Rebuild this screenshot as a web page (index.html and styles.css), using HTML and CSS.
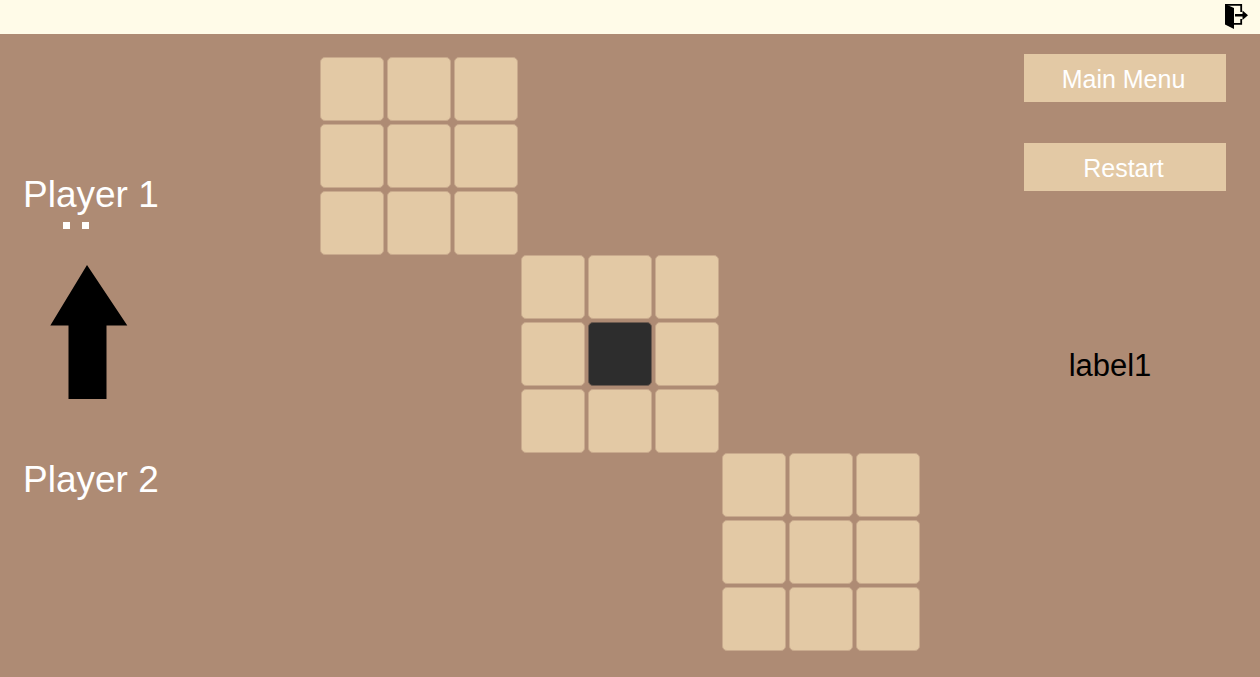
FILE: index.html
```html
<!DOCTYPE html>
<html lang="en">
<head>
<meta charset="utf-8">
<title>Game</title>
<link rel="stylesheet" href="styles.css">
</head>
<body>
<header class="topbar">
  <button class="exit" type="button" aria-label="Exit">
    <svg width="24" height="26" viewBox="0 0 24 26" aria-hidden="true">
      <path d="M1 1L10 5V26L1 21.500Z"/>
      <path d="M1 1.800H17.200V9M17.200 16V20.800H10" fill="none" stroke="#000" stroke-width="1.800"/>
      <path d="M11 11H18.500V7.500L24 12.200L18.500 17V13.600H11Z"/>
    </svg>
  </button>
</header>
<main class="game">
  <section class="players">
    <h2 class="player">Player 1</h2>
    <div class="score">
      <span class="dot"></span>
      <span class="dot"></span>
    </div>
    <svg class="turn" width="78" height="135" viewBox="0 0 78 135" aria-hidden="true">
      <path d="M36 0L76.300 60.500H55.500V134H17.500V60.500H-0.700Z"/>
    </svg>
    <h2 class="player">Player 2</h2>
  </section>
  <section class="board">
    <div class="block first">
      <button class="tile" type="button" aria-label="Tile 1"></button>
      <button class="tile" type="button" aria-label="Tile 2"></button>
      <button class="tile" type="button" aria-label="Tile 3"></button>
      <button class="tile" type="button" aria-label="Tile 4"></button>
      <button class="tile" type="button" aria-label="Tile 5"></button>
      <button class="tile" type="button" aria-label="Tile 6"></button>
      <button class="tile" type="button" aria-label="Tile 7"></button>
      <button class="tile" type="button" aria-label="Tile 8"></button>
      <button class="tile" type="button" aria-label="Tile 9"></button>
    </div>
    <div class="block second">
      <button class="tile" type="button" aria-label="Tile 10"></button>
      <button class="tile" type="button" aria-label="Tile 11"></button>
      <button class="tile" type="button" aria-label="Tile 12"></button>
      <button class="tile" type="button" aria-label="Tile 13"></button>
      <button class="tile dark" type="button" aria-label="Tile 14"></button>
      <button class="tile" type="button" aria-label="Tile 15"></button>
      <button class="tile" type="button" aria-label="Tile 16"></button>
      <button class="tile" type="button" aria-label="Tile 17"></button>
      <button class="tile" type="button" aria-label="Tile 18"></button>
    </div>
    <div class="block third">
      <button class="tile" type="button" aria-label="Tile 19"></button>
      <button class="tile" type="button" aria-label="Tile 20"></button>
      <button class="tile" type="button" aria-label="Tile 21"></button>
      <button class="tile" type="button" aria-label="Tile 22"></button>
      <button class="tile" type="button" aria-label="Tile 23"></button>
      <button class="tile" type="button" aria-label="Tile 24"></button>
      <button class="tile" type="button" aria-label="Tile 25"></button>
      <button class="tile" type="button" aria-label="Tile 26"></button>
      <button class="tile" type="button" aria-label="Tile 27"></button>
    </div>
  </section>
  <aside class="actions">
    <button class="action" type="button">Main Menu</button>
    <button class="action" type="button">Restart</button>
    <p class="status">label1</p>
  </aside>
</main>
</body>
</html>
```

FILE: styles.css
```css
* {
  box-sizing: border-box;
}

body {
  display: flex;
  flex-direction: column;
  min-height: 100vh;
  margin: 0;
  background: #ae8b74;
  font-family: "Liberation Sans", Arial, sans-serif;
}

button {
  padding: 0;
  border: 0;
  font: inherit;
  cursor: pointer;
}

.topbar {
  display: flex;
  justify-content: flex-end;
  align-items: center;
  height: 34px;
  padding: 0 12px 2px;
  background: #fffbe8;
}

.exit {
  display: flex;
  background: none;
}

.game {
  display: grid;
  grid-template-columns: 1fr auto 1fr;
  align-items: start;
  padding-right: 20px;
}

.players {
  display: flex;
  flex-direction: column;
  align-items: flex-start;
  padding: 141px 0 0 23px;
}

.player {
  margin: 0;
  color: #fff;
  font-size: 37px;
  font-weight: 400;
  line-height: 40px;
}

.score {
  display: flex;
  gap: 12px;
  margin: 7px 0 0 40px;
}

.dot {
  width: 7px;
  height: 7px;
  background: #fff;
}

.turn {
  display: block;
  margin: 36px 0 60px 28px;
  overflow: visible;
}

.board {
  display: grid;
  grid-template-columns: repeat(3, auto);
  column-gap: 3px;
  padding-top: 23px;
}

.block {
  display: grid;
  grid-template-columns: repeat(3, 64px);
  grid-auto-rows: 64px;
  gap: 3px;
}

.first {
  grid-area: 1 / 1;
}

.second {
  grid-area: 2 / 2;
}

.third {
  grid-area: 3 / 3;
}

.tile {
  border: 1px solid #c9aa8d;
  border-radius: 5px;
  background: #e3c9a5;
}

.dark {
  border-color: #6d5b50;
  background: #2d2d2d;
}

.actions {
  display: flex;
  flex-direction: column;
  align-items: flex-end;
  gap: 41px;
  padding: 20px 14px 0 0;
}

.action {
  width: 202px;
  height: 48px;
  padding: 3px 3px 0 0;
  background: #e3c9a5;
  color: #fff;
  font-size: 25px;
}

.status {
  width: 202px;
  margin: 114px 0 0;
  padding-right: 30px;
  font-size: 31px;
  line-height: 40px;
  text-align: center;
}
```
